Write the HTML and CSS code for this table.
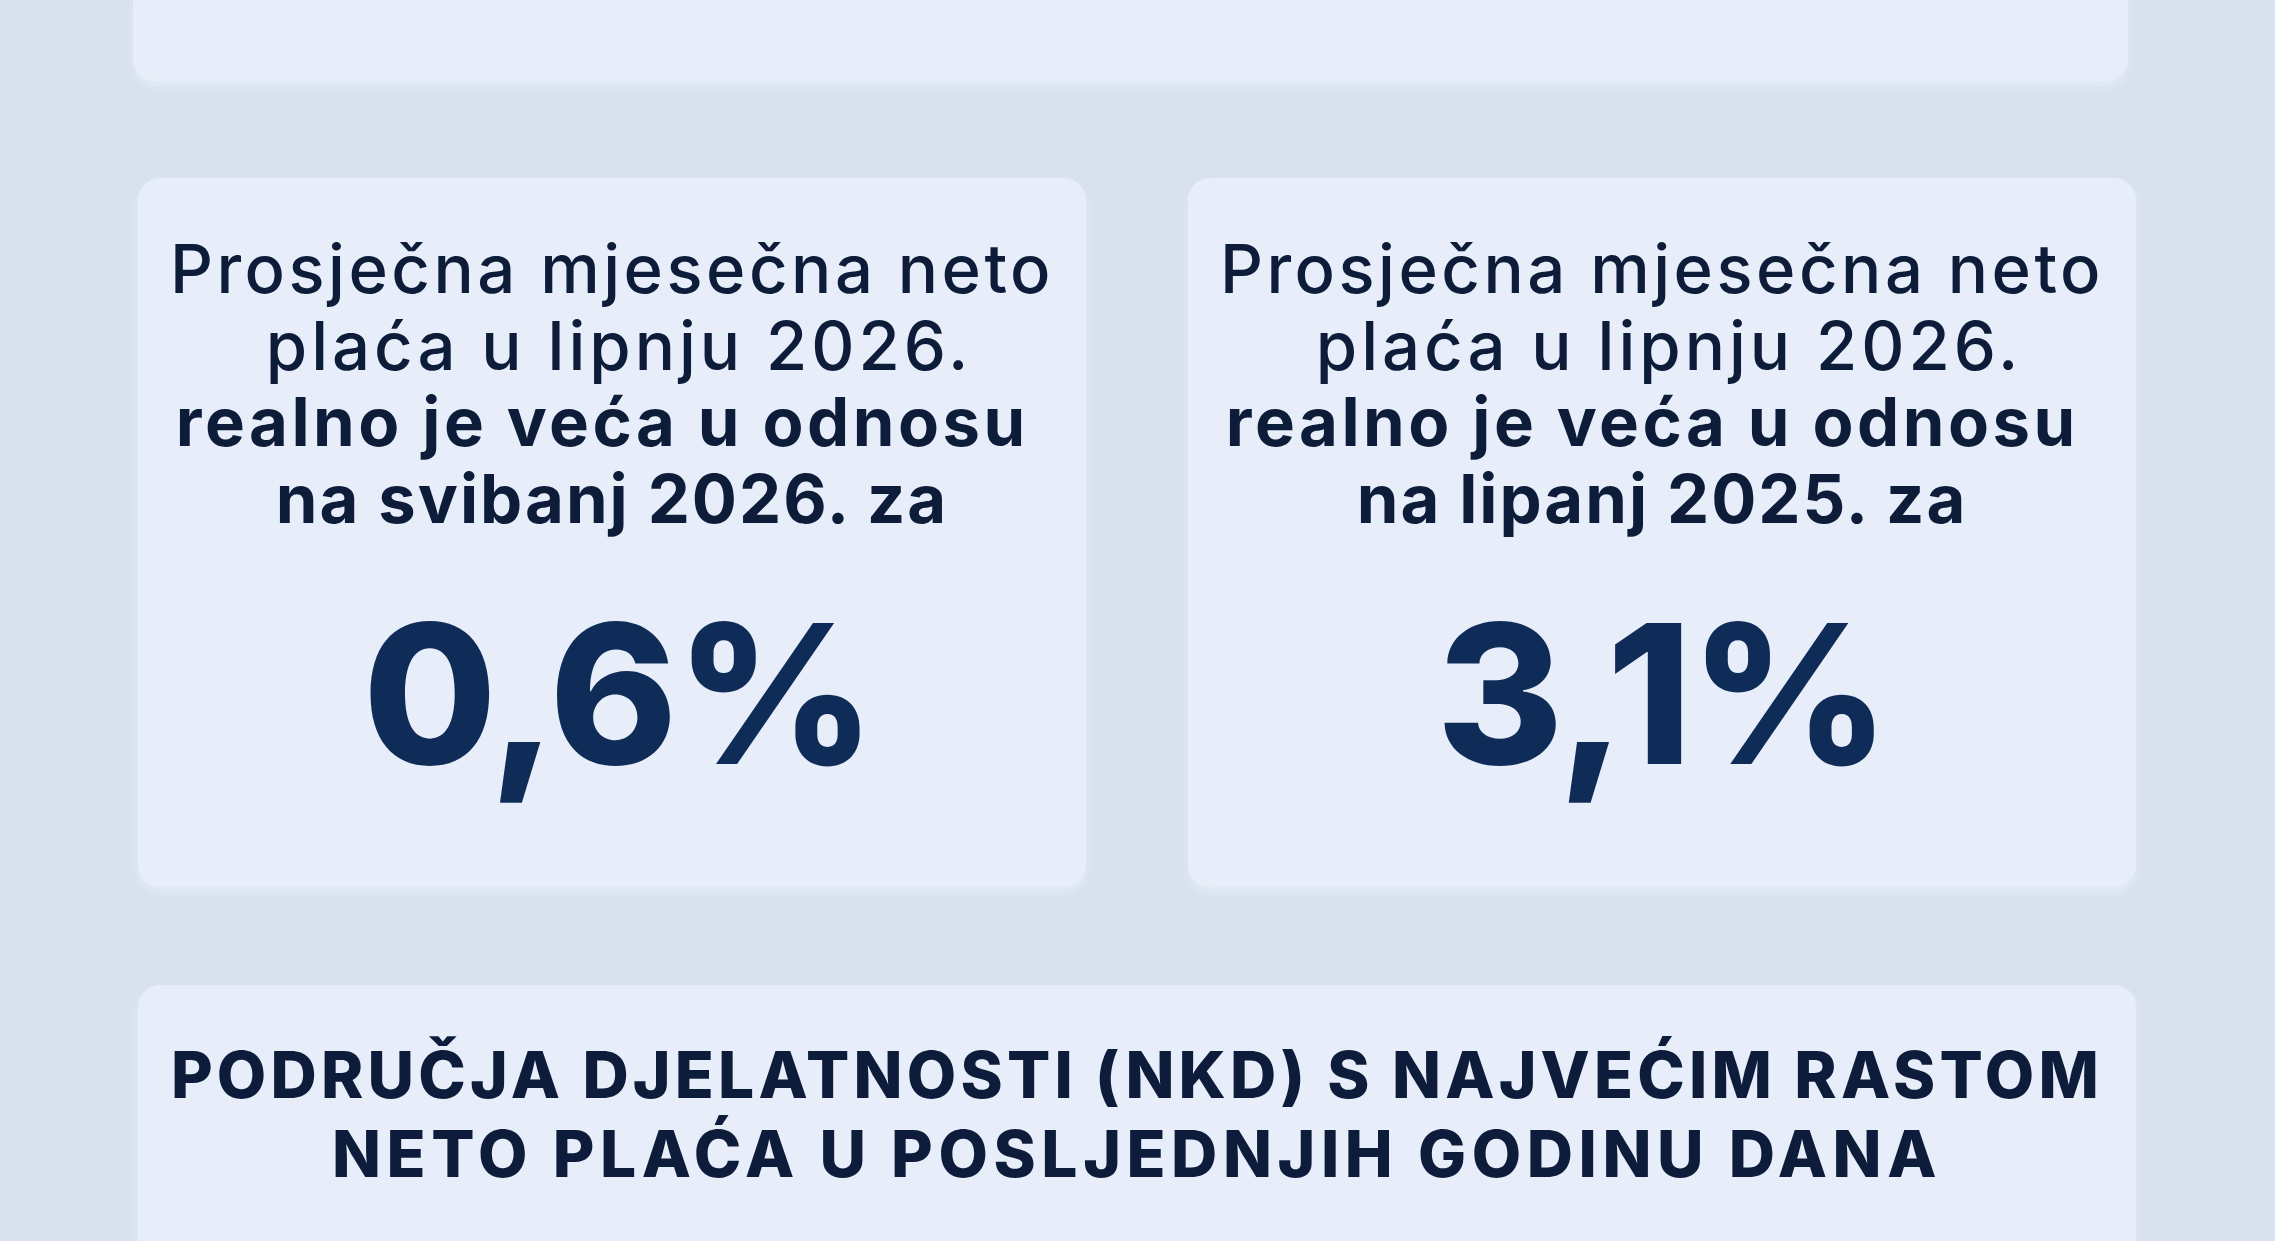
FILE: index.html
```html
<!DOCTYPE html>
<html lang="hr">
<head>
<meta charset="utf-8">
<title>Prosječna mjesečna neto plaća</title>
<link rel="stylesheet" href="styles.css">
</head>
<body>
<main class="page">
  <section class="banner"></section>

  <section class="stats">
    <article class="stat-card">
      <p class="stat-text"><span class="light">Prosječna mjesečna neto</span><br><span class="light wide">plaća u lipnju 2026.</span><br><span class="strong">realno je veća u odnosu&nbsp;</span><br><span class="strong tight">na svibanj 2026. za</span></p>
      <p class="stat-value stat-value-first">0,6%</p>
    </article>
    <article class="stat-card">
      <p class="stat-text"><span class="light">Prosječna mjesečna neto</span><br><span class="light wide">plaća u lipnju 2026.</span><br><span class="strong">realno je veća u odnosu&nbsp;</span><br><span class="strong tight">na lipanj 2025. za</span></p>
      <p class="stat-value">3,1%</p>
    </article>
  </section>

  <section class="ranking">
    <h2 class="ranking-title"><span class="title-line-a">PODRUČJA DJELATNOSTI (NKD) S NAJVEĆIM RASTOM</span><br><span class="title-line-b">NETO PLAĆA U POSLJEDNJIH GODINU DANA</span></h2>
  </section>
</main>
</body>
</html>
```

FILE: styles.css
```css
html, body {
  margin: 0;
  padding: 0;
}

body {
  background: #d8e2ef;
  font-family: "Inter", "Noto Sans", "DejaVu Sans", sans-serif;
  color: #0d1c39;
  overflow: hidden;
}

.page {
  display: flex;
  flex-direction: column;
  padding: 0 139px 0 138px;
}

.banner,
.stat-card,
.ranking {
  background: #e7eef9;
  box-shadow: 0 5px 8px rgba(236, 243, 252, 0.55);
}

.banner {
  height: 81px;
  border-radius: 0 0 22px 22px;
  margin: 0 8px 0 -5px;
}

.stats {
  display: grid;
  grid-template-columns: 1fr 1fr;
  column-gap: 102px;
  margin-top: 97px;
}

.stat-card {
  height: 709px;
  border-radius: 22px;
  display: flex;
  flex-direction: column;
  align-items: center;
  text-align: center;
}

.stat-text {
  margin: 53px 0 0;
  font-size: 67px;
  line-height: 76.5px;
  letter-spacing: 3.5px;
}

.light {
  font-weight: 500;
}

.strong {
  font-weight: 700;
}

.wide {
  letter-spacing: 4px;
  padding-left: 14px;
}

.tight {
  letter-spacing: 2px;
}

.stat-value {
  margin: 60px 0 0;
  font-size: 194px;
  line-height: 194px;
  font-weight: 800;
  color: #0f2b57;
  letter-spacing: -2px;
}

.stat-value-first {
  padding-left: 12px;
}

.ranking {
  margin-top: 98px;
  height: 400px;
  border-radius: 22px 22px 0 0;
  text-align: center;
}

.ranking-title {
  margin: 50px 0 0;
  font-size: 64px;
  line-height: 79px;
  font-weight: 800;
  color: #0d1c3a;
}

.title-line-a {
  letter-spacing: 4.2px;
}

.title-line-b {
  letter-spacing: 5.6px;
}
```
